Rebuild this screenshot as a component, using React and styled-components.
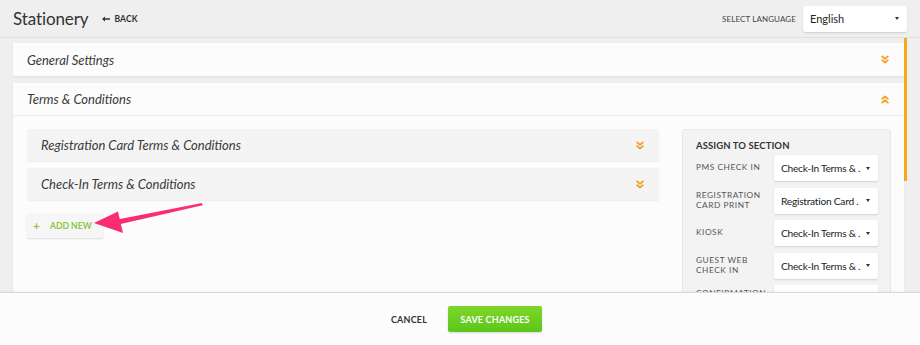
import React from "react";
import styled, { createGlobalStyle } from "styled-components";

const GlobalStyle = createGlobalStyle`
  html, body { margin: 0; padding: 0; }
  body {
    background: #efefef;
    font-family: Lato, "Noto Sans", sans-serif;
    color: #333;
  }
  * { box-sizing: border-box; }
`;

const Page = styled.div`
  position: relative;
  width: 920px;
  height: 345px;
  overflow: hidden;
  display: flex;
  flex-direction: column;
  background: #efefef;
`;

const Header = styled.header`
  height: 38px;
  flex: none;
  display: flex;
  align-items: center;
  justify-content: space-between;
  padding: 0 13px 0 13px;
  border-bottom: 1px solid #e0e0e0;
`;

const TitleGroup = styled.div`
  display: flex;
  align-items: center;
  gap: 13px;
`;

const Title = styled.h1`
  margin: 0;
  font-size: 17px;
  font-weight: 400;
  color: #333;
  letter-spacing: -0.1px;
`;

const BackLink = styled.span`
  display: flex;
  align-items: center;
  gap: 5px;
  font-size: 8.5px;
  font-weight: 700;
  color: #333;
  letter-spacing: 0.1px;
`;

const LangGroup = styled.div`
  display: flex;
  align-items: center;
  gap: 7px;
`;

const SmallCaps = styled.span`
  font-size: 8px;
  color: #444;
  letter-spacing: 0.1px;
`;

const SelectBox = styled.div`
  display: flex;
  align-items: center;
  justify-content: space-between;
  gap: 4px;
  width: ${(p) => p.$w}px;
  height: 26px;
  padding: 0 8px 0 7px;
  background: #fff;
  border-radius: 2px;
  box-shadow: 0 1px 2px rgba(0, 0, 0, 0.14);
  font-size: ${(p) => p.$fs || 10.2}px;
  letter-spacing: ${(p) => (p.$fs ? 0 : -0.25)}px;
  color: #222;
  white-space: nowrap;
`;

const SelectValue = styled.span`
  flex: none;
`;

const Caret = styled.span`
  width: 0;
  height: 0;
  border-left: 2.5px solid transparent;
  border-right: 2.5px solid transparent;
  border-top: 3px solid #333;
  flex: none;
`;

const Main = styled.div`
  flex: 1;
  min-height: 0;
  display: flex;
  overflow: hidden;
`;

const Content = styled.div`
  flex: 1;
  padding: 5px 0 0 13px;
`;

const Track = styled.div`
  width: 16px;
  flex: none;
`;

const Thumb = styled.div`
  width: 3px;
  height: 143px;
  background: #f6a81c;
`;

const Panel = styled.section`
  background: #fcfcfc;
  box-shadow: 0 1px 2px rgba(0, 0, 0, 0.07);
  margin-bottom: 7px;
`;

const PanelHead = styled.div`
  height: 33px;
  display: flex;
  align-items: center;
  justify-content: space-between;
  padding: 0 15px 0 14px;
  font-style: italic;
  font-size: 13px;
  color: #3a3a3a;
  border-bottom: ${(p) => (p.$open ? "1px solid #eaeaea" : "none")};
`;

const PanelBody = styled.div`
  display: flex;
  gap: 23px;
  padding: 13px 13px 0 14px;
  height: 240px;
`;

const LeftCol = styled.div`
  width: 632px;
  flex: none;
  display: flex;
  flex-direction: column;
  align-items: flex-start;
  gap: 7px;
`;

const SubItem = styled.div`
  align-self: stretch;
  height: 32px;
  display: flex;
  align-items: center;
  justify-content: space-between;
  padding: 0 15px 0 14px;
  background: #f4f4f4;
  border-radius: 2px;
  box-shadow: 0 1px 1px rgba(0, 0, 0, 0.06);
  font-style: italic;
  font-size: 13px;
  color: #3a3a3a;
`;

const AddButton = styled.button`
  margin-top: 6px;
  width: 76px;
  height: 25px;
  display: flex;
  align-items: center;
  gap: 10px;
  padding: 0 0 0 6px;
  border: none;
  border-radius: 2px;
  background: #f6f6f6;
  box-shadow: 0 1px 2px rgba(0, 0, 0, 0.13);
  font-family: inherit;
  font-size: 8.6px;
  font-weight: 700;
  color: #8cc63e;
  letter-spacing: 0;
`;

const Plus = styled.span`
  font-size: 12px;
  font-weight: 700;
  line-height: 1;
`;

const AssignPanel = styled.aside`
  width: 209px;
  flex: none;
  align-self: flex-start;
  background: #f3f3f3;
  border: 1px solid #e8e8e8;
  border-radius: 3px;
  padding: 10px 12px 10px 13px;
`;

const AssignTitle = styled.div`
  font-size: 9.5px;
  font-weight: 700;
  color: #333;
  letter-spacing: 0.1px;
  margin-bottom: 4px;
`;

const AssignRows = styled.div`
  display: grid;
  grid-template-columns: 78px 104px;
  row-gap: 6.5px;
  align-items: center;
`;

const AssignLabel = styled.div`
  max-width: 68px;
  font-size: 8.3px;
  line-height: 9.5px;
  color: #555;
  letter-spacing: 0.55px;
  text-transform: uppercase;
`;

const Footer = styled.footer`
  position: absolute;
  left: 0;
  right: 0;
  bottom: 0;
  height: 53px;
  background: #fcfcfc;
  border-top: 1px solid #d9d9d9;
  box-shadow: 0 -1px 2px rgba(0, 0, 0, 0.04);
  display: flex;
  align-items: center;
  justify-content: center;
  gap: 21px;
  padding-left: 13px;
`;

const CancelButton = styled.button`
  border: none;
  background: none;
  padding: 0;
  font-family: inherit;
  font-size: 9px;
  font-weight: 700;
  color: #333;
  letter-spacing: 0.2px;
`;

const SaveButton = styled.button`
  width: 94px;
  height: 26px;
  border: none;
  border-radius: 2px;
  background: linear-gradient(#7fd62b, #5cc61a);
  box-shadow: 0 1px 2px rgba(0, 0, 0, 0.15);
  font-family: inherit;
  font-size: 9px;
  font-weight: 700;
  color: #fff;
  letter-spacing: 0.2px;
`;

const Annotation = styled.svg`
  position: absolute;
  left: 0;
  top: 0;
  pointer-events: none;
`;

const Chevrons = ({ up }) => (
  <svg width="8" height="9" viewBox="0 0 8 9">
    <g
      fill="none"
      stroke="#f5a11f"
      strokeWidth="1.8"
      strokeLinecap="round"
      strokeLinejoin="round"
      transform={up ? "rotate(180 4 4.5)" : undefined}
    >
      <polyline points="1.2,1.4 4,3.9 6.8,1.4" />
      <polyline points="1.2,5.1 4,7.6 6.8,5.1" />
    </g>
  </svg>
);

const BackArrow = () => (
  <svg width="8" height="6" viewBox="0 0 8 6">
    <path d="M0 3 L3 0.5 L3 2.2 L8 2.2 L8 3.8 L3 3.8 L3 5.5 Z" fill="#333" />
  </svg>
);

const rows = [
  ["PMS Check In", "Check-In Terms & ."],
  ["Registration Card Print", "Registration Card ."],
  ["Kiosk", "Check-In Terms & ."],
  ["Guest Web Check In", "Check-In Terms & ."],
  ["Confirmation Email", "Check-In Terms & ."],
];

export default function App() {
  return (
    <Page>
      <GlobalStyle />
      <Header>
        <TitleGroup>
          <Title>Stationery</Title>
          <BackLink>
            <BackArrow />
            BACK
          </BackLink>
        </TitleGroup>
        <LangGroup>
          <SmallCaps>SELECT LANGUAGE</SmallCaps>
          <SelectBox $w={104} $fs={11}>
            <SelectValue>English</SelectValue>
            <Caret />
          </SelectBox>
        </LangGroup>
      </Header>
      <Main>
        <Content>
          <Panel>
            <PanelHead>
              General Settings
              <Chevrons />
            </PanelHead>
          </Panel>
          <Panel>
            <PanelHead $open>
              Terms &amp; Conditions
              <Chevrons up />
            </PanelHead>
            <PanelBody>
              <LeftCol>
                <SubItem>
                  Registration Card Terms &amp; Conditions
                  <Chevrons />
                </SubItem>
                <SubItem>
                  Check-In Terms &amp; Conditions
                  <Chevrons />
                </SubItem>
                <AddButton>
                  <Plus>+</Plus>
                  ADD NEW
                </AddButton>
              </LeftCol>
              <AssignPanel>
                <AssignTitle>ASSIGN TO SECTION</AssignTitle>
                <AssignRows>
                  {rows.map(([label, value]) => (
                    <React.Fragment key={label}>
                      <AssignLabel>{label}</AssignLabel>
                      <SelectBox $w={104}>
                        <SelectValue>{value}</SelectValue>
                        <Caret />
                      </SelectBox>
                    </React.Fragment>
                  ))}
                </AssignRows>
              </AssignPanel>
            </PanelBody>
          </Panel>
        </Content>
        <Track>
          <Thumb />
        </Track>
      </Main>
      <Annotation width="920" height="345" viewBox="0 0 920 345">
        <polygon
          points="118.5,224.6 117.5,219.4 202,203 202.6,205.2"
          fill="#fb2d72"
        />
        <polygon points="94,223 118,211.5 123,233" fill="#fb2d72" />
      </Annotation>
      <Footer>
        <CancelButton>CANCEL</CancelButton>
        <SaveButton>SAVE CHANGES</SaveButton>
      </Footer>
    </Page>
  );
}
